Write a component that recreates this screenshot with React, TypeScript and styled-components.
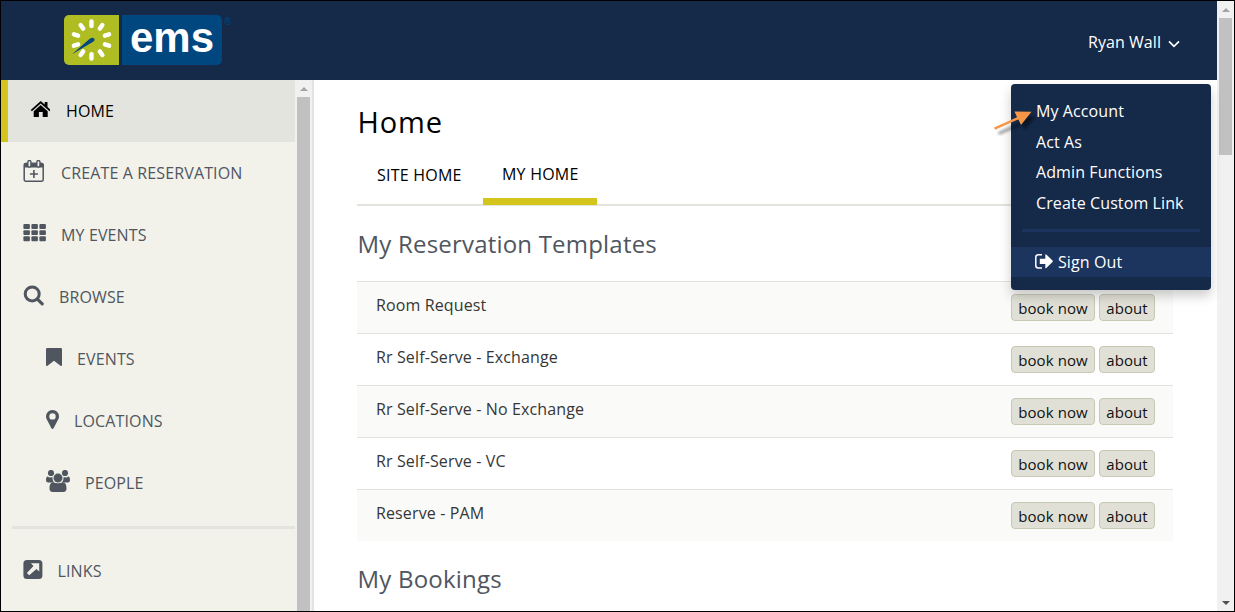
import React from 'react';
import styled, { createGlobalStyle, css } from 'styled-components';

const GlobalStyle = createGlobalStyle`
  * { box-sizing: border-box; }
  body { margin: 0; overflow: hidden; font-family: 'Open Sans', 'Liberation Sans', sans-serif; font-size: 16px; }
`;

const Window = styled.div`
  position: relative;
  display: flex;
  width: 1235px;
  height: 612px;
  border: 1px solid #000;
  background: #fff;
  overflow: hidden;
`;

const Page = styled.div`
  flex: 1;
  display: flex;
  flex-direction: column;
  min-width: 0;
`;

const Header = styled.header`
  flex: none;
  height: 79px;
  padding: 0 37px 2px 62px;
  display: flex;
  align-items: center;
  justify-content: space-between;
  background: #152949;
`;

const UserButton = styled.div`
  display: flex;
  align-items: center;
  color: #fff;
  gap: 7px;
  padding-top: 4px;
  letter-spacing: 0.05px;
  svg { margin-top: 4px; }
`;

const Body = styled.div`
  flex: 1;
  display: flex;
  min-height: 0;
`;

const Sidebar = styled.nav`
  width: 294px;
  flex: none;
  background: #f2f2ea;
  overflow: hidden;
`;

const NavItem = styled.div<{ $active?: boolean; $indent?: number; $gap: number }>`
  height: 62px;
  display: flex;
  align-items: center;
  gap: ${p => p.$gap}px;
  padding-left: ${p => p.$indent ?? 22}px;
  color: ${p => (p.$active ? '#000' : '#50565f')};
  letter-spacing: 0.13px;
  ${p => p.$active && css`
    background: #e4e4df;
    border-left: 7px solid #d4c51c;
  `}
  svg { flex: none; margin-top: -4px; }
`;

const NavDivider = styled.hr`
  height: 3px;
  margin: 12px 0 11px 11px;
  border: 0;
  background: #e4e4df;
`;

const ScrollTrack = styled.div<{ $edge?: boolean }>`
  width: 17px;
  flex: none;
  display: flex;
  flex-direction: column;
  align-items: center;
  background: #f1f1f1;
  ${p => p.$edge && css`
    box-sizing: content-box;
    border-right: 2px solid #e4e4df;
  `}
`;

const ScrollArrow = styled.div`
  height: 17px;
  display: flex;
  align-items: center;
  flex: none;
`;

const ScrollThumb = styled.div<{ $height?: number }>`
  width: 13px;
  background: #c1c1c1;
  ${p => (p.$height ? css`height: ${p.$height}px;` : css`flex: 1;`)}
`;

const Spacer = styled.div`
  flex: 1;
`;

const Main = styled.main`
  width: 859px;
  padding-left: 43px;
`;

const Title = styled.h1`
  margin: 23px 0 0 0.5px;
  font-size: 29px;
  line-height: 37px;
  font-weight: 400;
  letter-spacing: 0.85px;
  color: #000;
`;

const Tabs = styled.div`
  display: flex;
  height: 66px;
  width: 816px;
  border-bottom: 2px solid #e4e4df;
  color: #000;
`;

const Tab = styled.div<{ $active?: boolean }>`
  line-height: 22px;
  padding: 24px 19px 0 20px;
  letter-spacing: 0.22px;
  ${p => !p.$active && css`
    width: 124px;
    white-space: nowrap;
    padding-right: 0;
  `}
  ${p => p.$active && css`
    width: 114px;
    margin: 0 0 -1px 2px;
    padding: 23px 0 0 19px;
    border-bottom: 7px solid #d4c51c;
  `}
`;

const SectionTitle = styled.h2<{ $top: number }>`
  margin: ${p => p.$top}px 0 0 0.5px;
  font-size: 24px;
  line-height: 34px;
  font-weight: 400;
  letter-spacing: 0.2px;
  color: #50565f;
`;

const List = styled.div`
  margin-top: 20px;
  width: 816px;
`;

const Row = styled.div`
  height: 52px;
  padding: 0 18px 0 19px;
  display: flex;
  justify-content: space-between;
  border-top: 1px solid #e2e2de;
  color: #363636;
  &:nth-child(odd) { background: #fafaf8; }
`;

const RowName = styled.span`
  line-height: 22px;
  padding-top: 12px;
  letter-spacing: 0.13px;
`;

const Actions = styled.div`
  display: flex;
  gap: 4px;
  padding-top: 12px;
`;

const Action = styled.button<{ $width: number }>`
  width: ${p => p.$width}px;
  height: 27px;
  padding: 0;
  border: 1px solid #c8c8b5;
  border-radius: 4px;
  background: #e0e0d6;
  color: #111;
  font: 15px 'Open Sans', sans-serif;
  letter-spacing: 0.1px;
  white-space: nowrap;
`;

const Menu = styled.div`
  position: absolute;
  left: 1010px;
  top: 83px;
  width: 200px;
  height: 206px;
  padding-top: 12px;
  border-radius: 4px;
  background: #152949;
  box-shadow: 0 6px 12px rgba(0, 0, 0, 0.2);
  color: #fff;
`;

const MenuItem = styled.div<{ $active?: boolean }>`
  height: 30.6px;
  display: flex;
  align-items: center;
  gap: 5px;
  padding-left: 25px;
  white-space: nowrap;
  letter-spacing: 0.1px;
  ${p => p.$active && css`
    height: 30px;
    padding-left: 24px;
    background: #1b355f;
  `}
`;

const MenuDivider = styled.hr`
  height: 3px;
  margin: 10.6px 11px 15px;
  border: 0;
  background: #1b355f;
`;

const Pointer = styled.svg`
  position: absolute;
  left: 985px;
  top: 99px;
`;

const LogoBox = styled.div`
  display: flex;
`;

const Logo = () => (
  <LogoBox>
    <svg width="170" height="52" viewBox="63 14 170 52">
      <path d="M119 15H69a5 5 0 0 0-5 5v40a5 5 0 0 0 5 5h50z" fill="#afbd22" />
      <path d="M122 15h95a5 5 0 0 1 5 5v40a5 5 0 0 1-5 5h-95z" fill="#00467f" />
      <g stroke="#fff" strokeWidth="4.4" strokeLinecap="round">
        {[0, 36, 72, 108, 144, 180, 216, 252, 288, 324].map(a => (
          <path key={a} d="M91.500 21.500v4.400" transform={`rotate(${a} 91.500 40)`} />
        ))}
      </g>
      <path d="M72 54.200 89.500 39c2-1.400 4-1.500 4.800-.3.800 1.300-.2 2.600-2 3.600z" fill="#00467f" />
      <text x="130" y="51.500" fill="#fff" fontFamily="'Liberation Sans', Arial, sans-serif" fontWeight="700" fontSize="42" textLength="84" lengthAdjust="spacingAndGlyphs">ems</text>
      <text x="224" y="25" fill="#00467f" fontFamily="'Liberation Sans', Arial, sans-serif" fontSize="10">®</text>
    </svg>
  </LogoBox>
);

const HomeIcon = () => (
  <svg width="20" height="17" viewBox="-.7 0 20 17" fill="currentColor">
    <path d="M10 0 14 3.500V1h2.800v5L20 8.900l-1.200 1.300L10 2.500 1.200 10.200 0 8.900z" />
    <path d="M10 4.100 17 10.200V16h-5v-5H8.200v5H3v-5.800z" />
  </svg>
);

const CalendarIcon = () => (
  <svg width="21" height="22" viewBox="-.4 0 21 22">
    <path d="M1 7.500V4.500A2 2 0 0 1 3 2.800h15a2 2 0 0 1 2 1.700v3z" fill="currentColor" />
    <rect x=".8" y="3.500" width="19" height="17.700" rx="1.400" fill="none" stroke="currentColor" strokeWidth="1.500" />
    <path d="M6 2v3.500M15 2v3.500" stroke="currentColor" strokeWidth="4.400" strokeLinecap="round" />
    <path d="M6 2v3.500M15 2v3.500" stroke="#f2f2ea" strokeWidth="1.700" strokeLinecap="round" />
    <path d="M10.500 10v8M6.500 14h8" stroke="currentColor" strokeWidth="1.600" />
  </svg>
);

const GridIcon = () => (
  <svg width="23" height="18" viewBox="-.4 0 23 18" fill="currentColor">
    {[0, 6.200, 12.300].map(y => [0, 8, 16].map(x => (
      <rect key={`${x}-${y}`} x={x} y={y} width="6.500" height="4.900" rx="1" />
    )))}
  </svg>
);

const SearchIcon = () => (
  <svg width="21" height="21" viewBox="-.4 -.4 21 21" fill="none" stroke="currentColor">
    <circle cx="8.800" cy="8.500" r="7" strokeWidth="3" />
    <path d="m14 13.700 4.800 4.700" strokeWidth="3.200" strokeLinecap="round" />
  </svg>
);

const BookmarkIcon = () => (
  <svg width="16" height="18" viewBox="0 0 16 18" fill="currentColor">
    <path d="M1.200 0h13.600Q16 0 16 1.200V17q0 1.400-1.500.8L8 12.700 1.500 17.800Q0 18.400 0 17V1.200Q0 0 1.200 0z" />
  </svg>
);

const PinIcon = () => (
  <svg width="13" height="19" viewBox="0 0 13 19" fill="currentColor" fillRule="evenodd">
    <path d="M6.500 0A6.400 6.400 0 0 1 13 6.400c0 1-.2 1.900-.6 2.700L7.600 18.300q-1.100 1.300-2.200 0L.6 9.100A6.400 6.400 0 0 1 6.500 0zm0 3.200a3.200 3.200 0 1 0 0 6.400 3.200 3.200 0 0 0 0-6.400z" />
  </svg>
);

const PeopleIcon = () => (
  <svg width="24" height="22" viewBox="0 0 24 22" fill="currentColor">
    <circle cx="5" cy="3" r="3.100" />
    <circle cx="19" cy="3" r="3.100" />
    <path d="M1.700 6.500Q3.300 8 6.500 7c-.2 2.300.4 4 1.600 5.500H2.200Q0 12.500 0 10.300 0 6.800 1.700 6.500zM22.300 6.500Q20.700 8 17.500 7c.2 2.300-.4 4-1.600 5.500h5.900q2.200 0 2.200-2.200 0-3.500-1.700-3.800z" />
    <path d="M7 12.300q5 2 10 0c2.500.2 3.500 2.700 3.500 6.200q0 3.500-3.500 3.500H7q-3.500 0-3.500-3.500c0-3.500 1-6 3.500-6.200z" />
    <circle cx="12" cy="8" r="4.700" stroke="#f2f2ea" strokeWidth=".4" />
  </svg>
);

const LinkIcon = () => (
  <svg width="20" height="19" viewBox="-.4 0 20 19">
    <rect width="19" height="19" rx="3.500" fill="currentColor" />
    <path d="M7.500 3.200h8.300v8.300l-2.700-2.600-7.300 6.400-2.300-2.300 6.600-7.100z" fill="#f2f2ea" />
  </svg>
);

const SignOutIcon = () => (
  <svg width="18" height="15" viewBox="0 0 18 15">
    <path d="M7 .8H3.300Q.8.800.8 3.300v8.200q0 2.500 2.500 2.500H7" fill="none" stroke="#fff" strokeWidth="1.500" />
    <path d="M4.800 4.700h5.500V.9q.2-.9 1-.3l6.200 6q.7.700 0 1.400l-6.200 6q-.8.600-1-.3V10H4.800z" fill="#fff" />
  </svg>
);

const Triangle = ({ down }: { down?: boolean }) => (
  <svg width="8" height="4" viewBox="0 0 8 4">
    <path d={down ? 'M0 0h8L4 4z' : 'M0 4h8L4 0z'} fill={down ? '#505050' : '#a3a3a3'} />
  </svg>
);

const templates = ['Room Request', 'Rr Self-Serve - Exchange', 'Rr Self-Serve - No Exchange', 'Rr Self-Serve - VC', 'Reserve - PAM'];

export default function App() {
  return (
    <>
      <GlobalStyle />
      <Window>
        <Page>
          <Header>
            <Logo />
            <UserButton>
              Ryan Wall
              <svg width="12" height="8" viewBox="0 0 12 8"><path d="m1 1.300 5 5 5-5" fill="none" stroke="#fff" strokeWidth="1.700" /></svg>
            </UserButton>
          </Header>
          <Body>
            <Sidebar>
              <NavItem $active $gap={16}><HomeIcon />HOME</NavItem>
              <NavItem $gap={17}><CalendarIcon />CREATE A RESERVATION</NavItem>
              <NavItem $gap={15}><GridIcon />MY EVENTS</NavItem>
              <NavItem $gap={15}><SearchIcon />BROWSE</NavItem>
              <NavItem $indent={45} $gap={15}><BookmarkIcon />EVENTS</NavItem>
              <NavItem $indent={45} $gap={15}><PinIcon />LOCATIONS</NavItem>
              <NavItem $indent={45} $gap={15}><PeopleIcon />PEOPLE</NavItem>
              <NavDivider />
              <NavItem $gap={14.5}><LinkIcon />LINKS</NavItem>
            </Sidebar>
            <ScrollTrack $edge>
              <ScrollArrow><Triangle /></ScrollArrow>
              <ScrollThumb />
            </ScrollTrack>
            <Main>
              <Title>Home</Title>
              <Tabs>
                <Tab>SITE HOME</Tab>
                <Tab $active>MY HOME</Tab>
              </Tabs>
              <SectionTitle $top={21}>My Reservation Templates</SectionTitle>
              <List>
                {templates.map(name => (
                  <Row key={name}>
                    <RowName>{name}</RowName>
                    <Actions>
                      <Action $width={84}>book now</Action>
                      <Action $width={56}>about</Action>
                    </Actions>
                  </Row>
                ))}
              </List>
              <SectionTitle $top={21}>My Bookings</SectionTitle>
            </Main>
          </Body>
        </Page>
        <ScrollTrack>
          <ScrollArrow><Triangle /></ScrollArrow>
          <ScrollThumb $height={137} />
          <Spacer />
          <ScrollArrow><Triangle down /></ScrollArrow>
        </ScrollTrack>
        <Menu>
          <MenuItem>My Account</MenuItem>
          <MenuItem>Act As</MenuItem>
          <MenuItem>Admin Functions</MenuItem>
          <MenuItem>Create Custom Link</MenuItem>
          <MenuDivider />
          <MenuItem $active><SignOutIcon />Sign Out</MenuItem>
        </Menu>
        <Pointer width="54" height="42" viewBox="986 100 54 42">
          <defs>
            <filter id="soft" x="-20%" y="-30%" width="150%" height="180%"><feGaussianBlur stdDeviation="1.500" /></filter>
          </defs>
          <g transform="translate(4 5)" opacity=".45" filter="url(#soft)">
            <path d="m994 127.500 23-10.200-2.500-5.800 17 .2-10.500 13.300-2.600-5.600-23.300 10.300z" fill="#000" />
          </g>
          <path d="m994 127.500 23-10.200-2.500-5.800 17 .2-10.500 13.300-2.600-5.600-23.300 10.300z" fill="#f79646" />
        </Pointer>
      </Window>
    </>
  );
}
